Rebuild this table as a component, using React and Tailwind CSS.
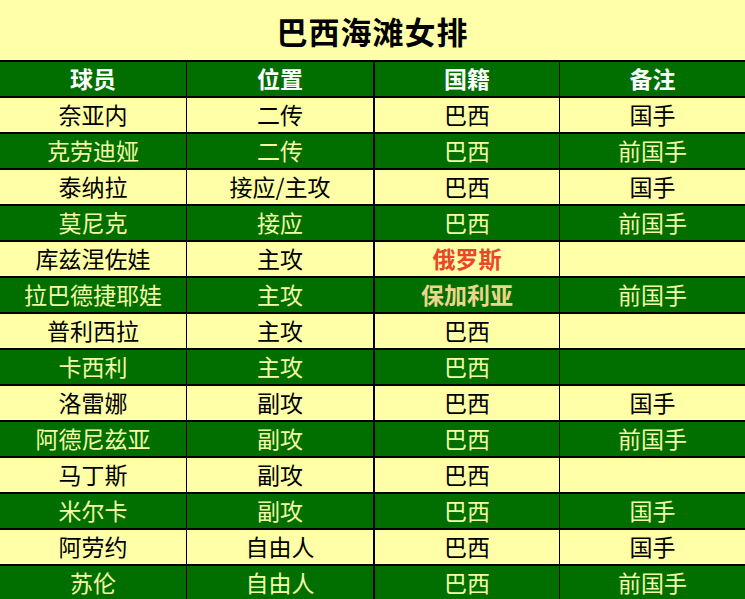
import React from "react";

const rows = [
  ["奈亚内", "二传", "巴西", "国手"],
  ["克劳迪娅", "二传", "巴西", "前国手"],
  ["泰纳拉", "接应/主攻", "巴西", "国手"],
  ["莫尼克", "接应", "巴西", "前国手"],
  ["库兹涅佐娃", "主攻", "俄罗斯", ""],
  ["拉巴德捷耶娃", "主攻", "保加利亚", "前国手"],
  ["普利西拉", "主攻", "巴西", ""],
  ["卡西利", "主攻", "巴西", ""],
  ["洛雷娜", "副攻", "巴西", "国手"],
  ["阿德尼兹亚", "副攻", "巴西", "前国手"],
  ["马丁斯", "副攻", "巴西", ""],
  ["米尔卡", "副攻", "巴西", "国手"],
  ["阿劳约", "自由人", "巴西", "国手"],
  ["苏伦", "自由人", "巴西", "前国手"],
];

const font = { fontFamily: '"Noto Sans CJK SC", "Noto Sans", sans-serif' };

function Cell({ children, className = "" }) {
  return (
    <div className={"flex items-center justify-center h-full pb-[1px] " + className}>
      {children}
    </div>
  );
}

function countryClass(c, green) {
  if (c === "俄罗斯") return "text-[#e8472a] font-bold";
  if (c === "保加利亚") return "text-[#ecd68c] font-bold";
  return green ? "text-[#f4fba6]" : "text-black";
}

export default function App() {
  return (
    <div
      className="w-[745px] h-[599px] overflow-hidden bg-[#ffffa8] text-[23px] leading-none"
      style={font}
    >
      <div className="h-[60px] flex items-center justify-center bg-[#ffffaa]">
        <span className="text-[31px] font-bold text-black tracking-[1px]">巴西海滩女排</span>
      </div>
      <div className="grid grid-cols-[186px_187px_186px_186px] h-[36px] border-t-2 border-black bg-[#006f00] text-white font-bold">
        <Cell>球员</Cell>
        <Cell className="border-l border-black">位置</Cell>
        <Cell className="border-l-2 border-black">国籍</Cell>
        <Cell className="border-l border-black">备注</Cell>
      </div>
      {rows.map((r, i) => {
        const green = i % 2 === 1;
        const txt = green ? "text-[#f4fba6]" : "text-black";
        return (
          <div
            key={i}
            className={
              "grid grid-cols-[186px_187px_186px_186px] h-[36px] border-t-2 border-black " +
              (green ? "bg-[#006f00]" : "bg-[#ffffa8]")
            }
          >
            <Cell className={txt}>{r[0]}</Cell>
            <Cell className={"border-l border-black " + txt}>{r[1]}</Cell>
            <Cell className={"border-l-2 border-black " + countryClass(r[2], green)}>{r[2]}</Cell>
            <Cell className={"border-l border-black " + txt}>{r[3]}</Cell>
          </div>
        );
      })}
    </div>
  );
}
